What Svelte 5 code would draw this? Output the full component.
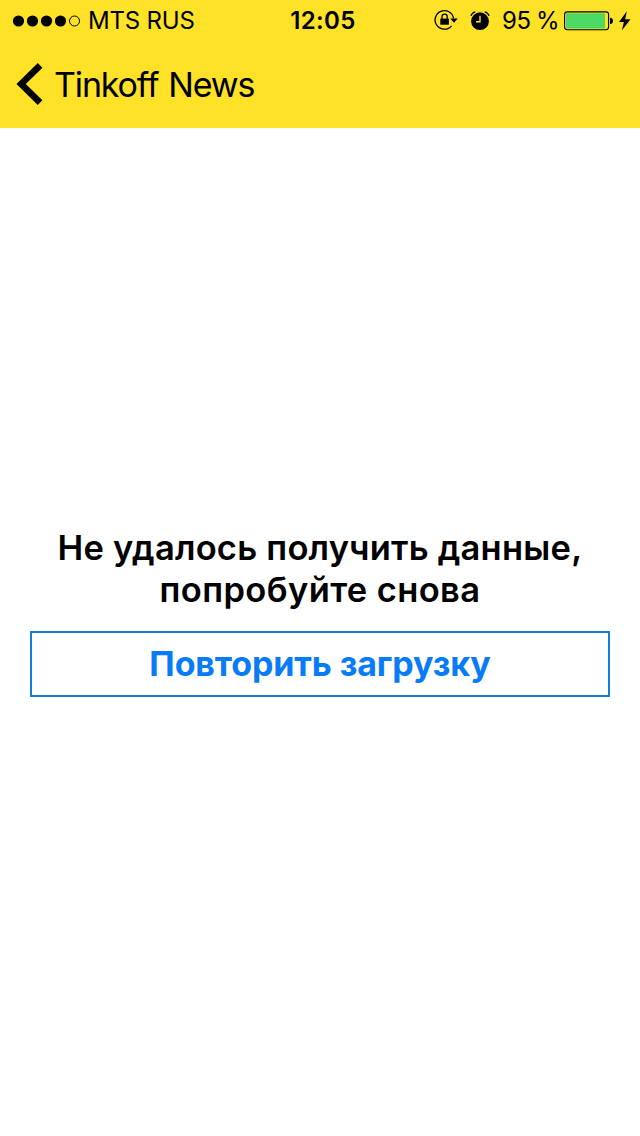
<script>
  const signal = [true, true, true, true, false];
</script>

<div class="screen">
  <header>
    <div class="status">
      <div class="carrier">
        <svg width="68" height="12" viewBox="0 0 68 12">
          {#each signal as on, i}
            <circle cx={5.5 + i * 14} cy="6" r={on ? 5.6 : 5} class:empty={!on} />
          {/each}
        </svg>
        <span>MTS RUS</span>
      </div>
      <time>12:05</time>
      <div class="indicators">
        <svg class="lock" width="24" height="22" viewBox="0 0 24 22">
          <path d="M17.6 15.8A9.3 9.3 0 1 1 19.6 8.4" fill="none" stroke="#000" stroke-width="1.3" />
          <path d="M16.2 8.6h7.6L20 12.8z" />
          <path d="M6.3 8.6h8.6v6.1H6.3z" />
          <path d="M8 9V6.8a2.6 2.6 0 0 1 5.2 0V9" fill="none" stroke="#000" stroke-width="1.3" />
        </svg>
        <svg class="alarm" width="20" height="20" viewBox="0 0 20 20">
          <circle cx="10" cy="10.2" r="8.9" />
          <path d="M.9 4.9Q2 1.6 5.3.8M19.1 4.9Q18 1.6 14.7.8" fill="none" stroke="#000" stroke-width="1.3" />
          <path d="M10 4.8v6H6" fill="none" stroke="#fee228" stroke-width="1.4" />
        </svg>
        <span class="percent">95 %</span>
        <svg class="battery" width="50" height="20" viewBox="0 0 50 20">
          <rect x=".6" y=".9" width="44" height="17.8" rx="2.6" fill="none" stroke="#000" stroke-width="1.1" />
          <rect x="2" y="2.2" width="39" height="15.2" rx="1" fill="#4cd964" />
          <path d="M46 6.7q3 .4 3 3.2t-3 3.2z" />
        </svg>
        <svg class="bolt" width="12" height="20" viewBox="0 0 12 20">
          <path d="M7.8.3 0 11h4.9L2.8 19.5 11.5 8.2H6.2z" />
        </svg>
      </div>
    </div>
    <nav>
      <svg width="26" height="42" viewBox="0 0 26 42">
        <path d="M23.1 2.4 4.2 21l18.9 18.6" fill="none" stroke="#000" stroke-width="6.6" />
      </svg>
      <span>Tinkoff News</span>
    </nav>
  </header>
  <main>
    <p><span class="first">Не удалось получить данные,</span><br /><span class="second">попробуйте снова</span></p>
    <button><span>Повторить загрузку</span></button>
  </main>
</div>

<style>
  :global(body) { background: #fff; }
  .screen {
    height: 1136px;
    display: flex;
    flex-direction: column;
    overflow: hidden;
    background: #fff;
    color: #000;
    font-family: Inter, "Liberation Sans", sans-serif;
  }
  header { height: 128px; background: #fee228; }
  svg { display: block; flex: none; overflow: visible; }
  .status {
    height: 41px;
    display: grid;
    grid-template-columns: 1fr auto 1fr;
    align-items: center;
    font-size: 24px;
    line-height: 41px;
    white-space: nowrap;
  }
  .carrier { display: flex; align-items: center; padding-left: 13px; gap: 7px; }
  .carrier span { letter-spacing: -0.2px; }
  .empty { fill: none; stroke: #000; stroke-width: 1; }
  time { font-weight: 600; margin-left: 6px; letter-spacing: 0.35px; }
  .indicators { display: flex; align-items: center; justify-content: flex-end; padding-right: 9px; }
  .alarm { margin: 0 12px; }
  .percent { margin-right: 5px; letter-spacing: -0.6px; word-spacing: -0.5px; }
  .bolt { margin-left: 5px; }
  nav { height: 87px; display: flex; align-items: center; padding-left: 17px; gap: 11px; font-size: 34px; letter-spacing: -1.15px; word-spacing: 1.5px; white-space: nowrap; }
  nav svg, nav span { margin-top: -1px; }
  main { flex: 1; display: flex; flex-direction: column; padding: 399px 30px 0; }
  p { margin: 0; text-align: center; font-size: 34.5px; line-height: 42px; font-weight: 600; white-space: nowrap; }
  .first { letter-spacing: 0.22px; }
  .second { letter-spacing: 0.38px; }
  button {
    height: 66px;
    margin-top: 20px;
    padding: 0;
    border: 2px solid #147be0;
    border-radius: 0;
    background: #fff;
    color: #087bf8;
    font: 700 34px/62px Inter, "Liberation Sans", sans-serif;
    letter-spacing: -0.12px;
  }
</style>
